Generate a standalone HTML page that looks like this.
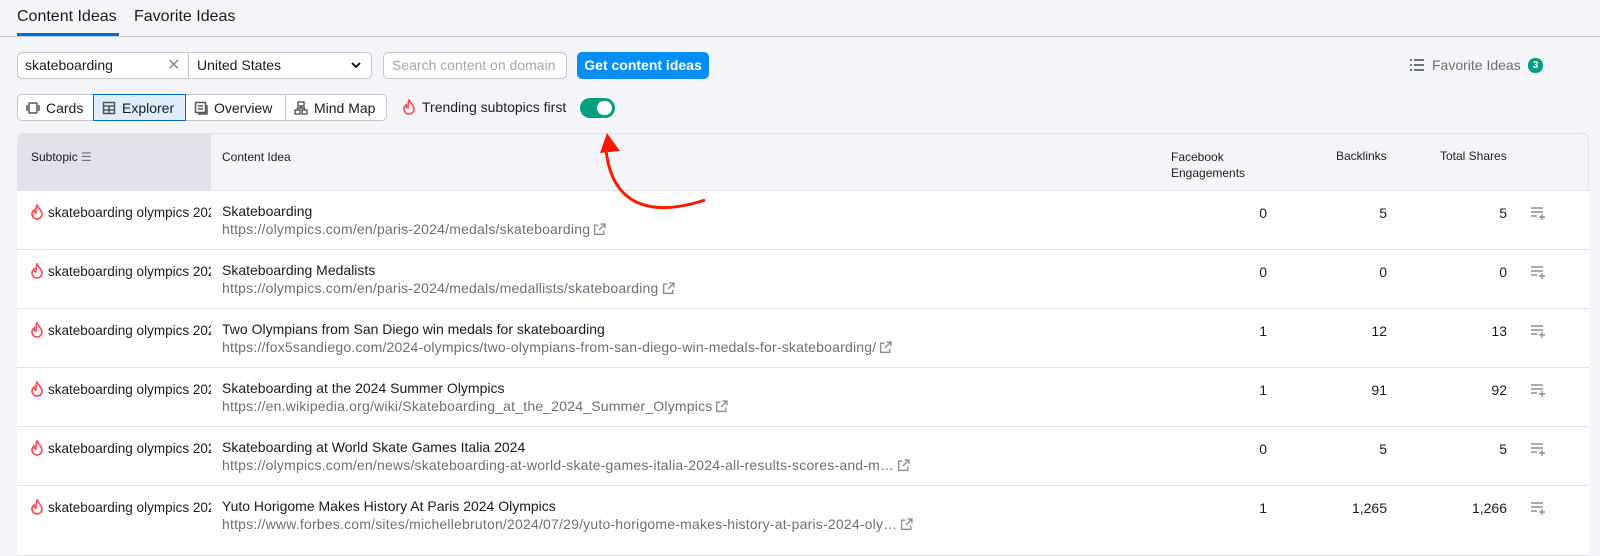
<!DOCTYPE html>
<html><head><meta charset="utf-8"><style>
*{box-sizing:border-box;margin:0;padding:0}
body{width:1600px;height:556px;background:#f4f5f9;font-family:"Liberation Sans",sans-serif;color:#191b23;font-size:13px;position:relative;overflow:hidden}
.a{position:absolute;white-space:nowrap}
.tab{font-size:16px;top:8px}
.box{position:absolute;background:#fff;border:1px solid #c4c7cf;border-radius:5px}
.btn{position:absolute;top:94px;height:27px;background:#fff;border:1px solid #c4c7cf;display:flex;align-items:center;font-size:14px;padding-left:8px;gap:6px}
.row{position:absolute;left:17px;width:1572px;height:59px;background:#fff;border-bottom:1px solid #e0e1e9}
.sub{position:absolute;left:14px;top:13px;width:180px;overflow:hidden;white-space:nowrap;font-size:13.5px;display:flex;gap:5px;align-items:center}
.sub svg{flex:none}
.tt{position:absolute;left:205px;top:12px;font-size:14px;white-space:nowrap}
.url{position:absolute;left:205px;top:30px;font-size:14px;letter-spacing:0.2px;color:#6c6e79;white-space:nowrap}
.url svg{vertical-align:-2px;margin-left:3px}
.n{position:absolute;top:14px;font-size:14px;text-align:right}
.ad{position:absolute;right:42px;top:15px}
</style></head><body>
<svg width="0" height="0" style="position:absolute"><defs>
<symbol id="fl" viewBox="0 0 12 16"><path d="M6 1C7 4 11 6 11 10a5 5 0 0 1-10 0c0-2 1-3 2-4 0 2 1 3 2 3C5 6 5 3 6 1z" fill="none" stroke="#ff4953" stroke-width="1.6"/></symbol>
<symbol id="ex" viewBox="0 0 12 12"><path d="M5 2H1.5v8.5H10V7M7 1h4v4M11 1L5.5 6.5" fill="none" stroke="#8b8e99" stroke-width="1.3"/></symbol>
<symbol id="ad" viewBox="0 0 16 14"><path d="M0 2h12M0 6h12M0 10h6M11 8v6M8 11h6" fill="none" stroke="#8b8e99" stroke-width="1.4"/></symbol>
</defs></svg>
<div class="a tab" style="left:17px">Content Ideas</div>
<div class="a tab" style="left:134px">Favorite Ideas</div>
<div class="a" style="left:17px;top:33px;width:102px;height:3px;background:#006dca"></div>
<div class="a" style="left:0;top:36px;width:1600px;height:1px;background:#c4c7cf"></div>

<div class="box" style="left:17px;top:52px;width:355px;height:27px"></div>
<div class="a" style="left:188px;top:53px;width:1px;height:25px;background:#c4c7cf"></div>
<div class="a" style="left:25px;top:57px;font-size:14px">skateboarding</div>
<div class="a" style="left:167px;top:55px;font-size:16px;color:#8b8e99">✕</div>
<div class="a" style="left:197px;top:57px;font-size:14px">United States</div>
<svg class="a" style="left:350px;top:60px" width="12" height="10"><path d="M2 3l4 4 4-4" fill="none" stroke="#191b23" stroke-width="2"/></svg>
<div class="box" style="left:383px;top:52px;width:184px;height:27px"></div>
<div class="a" style="left:392px;top:57px;font-size:14px;color:#a4a6b0">Search content on domain</div>
<div class="a" style="left:577px;top:52px;width:132px;height:27px;background:#008ff8;border-radius:5px;color:#fff;font-size:14px;font-weight:bold;text-align:center;line-height:27px">Get content ideas</div>

<svg class="a" style="left:1410px;top:59px" width="14" height="12"><g fill="#6c6e79"><rect x="0" y="0" width="2" height="2"/><rect x="0" y="5" width="2" height="2"/><rect x="0" y="10" width="2" height="2"/><rect x="4" y="0" width="10" height="2"/><rect x="4" y="5" width="10" height="2"/><rect x="4" y="10" width="10" height="2"/></g></svg>
<div class="a" style="left:1432px;top:57px;font-size:14px;color:#6c6e79">Favorite Ideas</div>
<div class="a" style="left:1528px;top:58px;width:15px;height:15px;border-radius:7px;background:#009f81;color:#fff;font-size:10px;text-align:center;line-height:15px;font-weight:bold">3</div>

<div class="btn" style="left:17px;width:77px;border-radius:5px 0 0 5px"><svg width="14" height="14"><rect x="3" y="2" width="8" height="10" rx="1" fill="none" stroke="#555" stroke-width="1.5"/><path d="M1 4v6M13 4v6" stroke="#555" stroke-width="1.5"/></svg>Cards</div>
<div class="btn" style="left:93px;width:93px;background:#e0ecf9;border-color:#006dca;z-index:2"><svg width="14" height="14"><rect x="1.5" y="1.5" width="11" height="11" fill="none" stroke="#555" stroke-width="1.5"/><path d="M1 5h12M1 9h12M7 5v8" stroke="#555" stroke-width="1.5"/></svg>Explorer</div>
<div class="btn" style="left:185px;width:101px"><svg width="14" height="14"><rect x="1.5" y="1.5" width="10" height="10" fill="none" stroke="#555" stroke-width="1.5"/><path d="M4 5h5M4 8h5M13 4v9H4" stroke="#555" stroke-width="1.5" fill="none"/></svg>Overview</div>
<div class="btn" style="left:285px;width:102px;border-radius:0 5px 5px 0"><svg width="14" height="14"><rect x="4" y="1" width="6" height="4" fill="none" stroke="#555" stroke-width="1.4"/><rect x="1" y="9" width="5" height="4" fill="none" stroke="#555" stroke-width="1.4"/><rect x="8" y="9" width="5" height="4" fill="none" stroke="#555" stroke-width="1.4"/><path d="M7 5v2M3.5 9V7h7v2" stroke="#555" stroke-width="1.4" fill="none"/></svg>Mind Map</div>

<svg class="a" style="left:403px;top:99px" width="12" height="16"><use href="#fl"/></svg>
<div class="a" style="left:422px;top:99px;font-size:14px">Trending subtopics first</div>
<div class="a" style="left:580px;top:98px;width:35px;height:20px;border-radius:10px;background:#009f81"></div>
<div class="a" style="left:597px;top:101px;width:15px;height:14px;border-radius:7px;background:#fff"></div>

<div class="a" style="left:17px;top:133px;width:1572px;height:58px;background:#f4f5f9;border:1px solid #e0e1e9;border-radius:6px 6px 0 0"></div>
<div class="a" style="left:18px;top:134px;width:193px;height:56px;background:#e0e1e9;border-radius:6px 0 0 0"></div>
<div class="a" style="left:31px;top:150px;font-size:12px">Subtopic <span style="color:#6c6e79">☰</span></div>
<div class="a" style="left:222px;top:150px;font-size:12px">Content Idea</div>
<div class="a" style="left:1171px;top:149px;font-size:12px;line-height:16px">Facebook<br>Engagements</div>
<div class="a" style="left:1336px;top:149px;font-size:12px">Backlinks</div>
<div class="a" style="left:1440px;top:149px;font-size:12px">Total Shares</div>

<div class="row" style="top:191px"><div class="sub"><svg width="12" height="16"><use href="#fl"/></svg>skateboarding olympics 2024</div><div class="tt">Skateboarding</div><div class="url">https://olympics.com/en/paris-2024/medals/skateboarding<svg width="13" height="13"><use href="#ex"/></svg></div><div class="n" style="right:322px">0</div><div class="n" style="right:202px">5</div><div class="n" style="right:82px">5</div><svg class="ad" width="16" height="14"><use href="#ad"/></svg></div>
<div class="row" style="top:250px"><div class="sub"><svg width="12" height="16"><use href="#fl"/></svg>skateboarding olympics 2024</div><div class="tt">Skateboarding Medalists</div><div class="url">https://olympics.com/en/paris-2024/medals/medallists/skateboarding<svg width="13" height="13"><use href="#ex"/></svg></div><div class="n" style="right:322px">0</div><div class="n" style="right:202px">0</div><div class="n" style="right:82px">0</div><svg class="ad" width="16" height="14"><use href="#ad"/></svg></div>
<div class="row" style="top:309px"><div class="sub"><svg width="12" height="16"><use href="#fl"/></svg>skateboarding olympics 2024</div><div class="tt">Two Olympians from San Diego win medals for skateboarding</div><div class="url">https://fox5sandiego.com/2024-olympics/two-olympians-from-san-diego-win-medals-for-skateboarding/<svg width="13" height="13"><use href="#ex"/></svg></div><div class="n" style="right:322px">1</div><div class="n" style="right:202px">12</div><div class="n" style="right:82px">13</div><svg class="ad" width="16" height="14"><use href="#ad"/></svg></div>
<div class="row" style="top:368px"><div class="sub"><svg width="12" height="16"><use href="#fl"/></svg>skateboarding olympics 2024</div><div class="tt">Skateboarding at the 2024 Summer Olympics</div><div class="url">https://en.wikipedia.org/wiki/Skateboarding_at_the_2024_Summer_Olympics<svg width="13" height="13"><use href="#ex"/></svg></div><div class="n" style="right:322px">1</div><div class="n" style="right:202px">91</div><div class="n" style="right:82px">92</div><svg class="ad" width="16" height="14"><use href="#ad"/></svg></div>
<div class="row" style="top:427px"><div class="sub"><svg width="12" height="16"><use href="#fl"/></svg>skateboarding olympics 2024</div><div class="tt">Skateboarding at World Skate Games Italia 2024</div><div class="url">https://olympics.com/en/news/skateboarding-at-world-skate-games-italia-2024-all-results-scores-and-m…<svg width="13" height="13"><use href="#ex"/></svg></div><div class="n" style="right:322px">0</div><div class="n" style="right:202px">5</div><div class="n" style="right:82px">5</div><svg class="ad" width="16" height="14"><use href="#ad"/></svg></div>
<div class="row" style="top:486px;height:70px"><div class="sub"><svg width="12" height="16"><use href="#fl"/></svg>skateboarding olympics 2024</div><div class="tt">Yuto Horigome Makes History At Paris 2024 Olympics</div><div class="url">https://www.forbes.com/sites/michellebruton/2024/07/29/yuto-horigome-makes-history-at-paris-2024-oly…<svg width="13" height="13"><use href="#ex"/></svg></div><div class="n" style="right:322px">1</div><div class="n" style="right:202px">1,265</div><div class="n" style="right:82px">1,266</div><svg class="ad" width="16" height="14"><use href="#ad"/></svg></div>

<svg class="a" style="left:0;top:0" width="1600" height="556"><path d="M705 200 C650 218 612 205 606 150" fill="none" stroke="#ff1a00" stroke-width="3"/><path d="M607 133 L600 153 L620 151 Z" fill="#ff1a00"/></svg>
</body></html>
